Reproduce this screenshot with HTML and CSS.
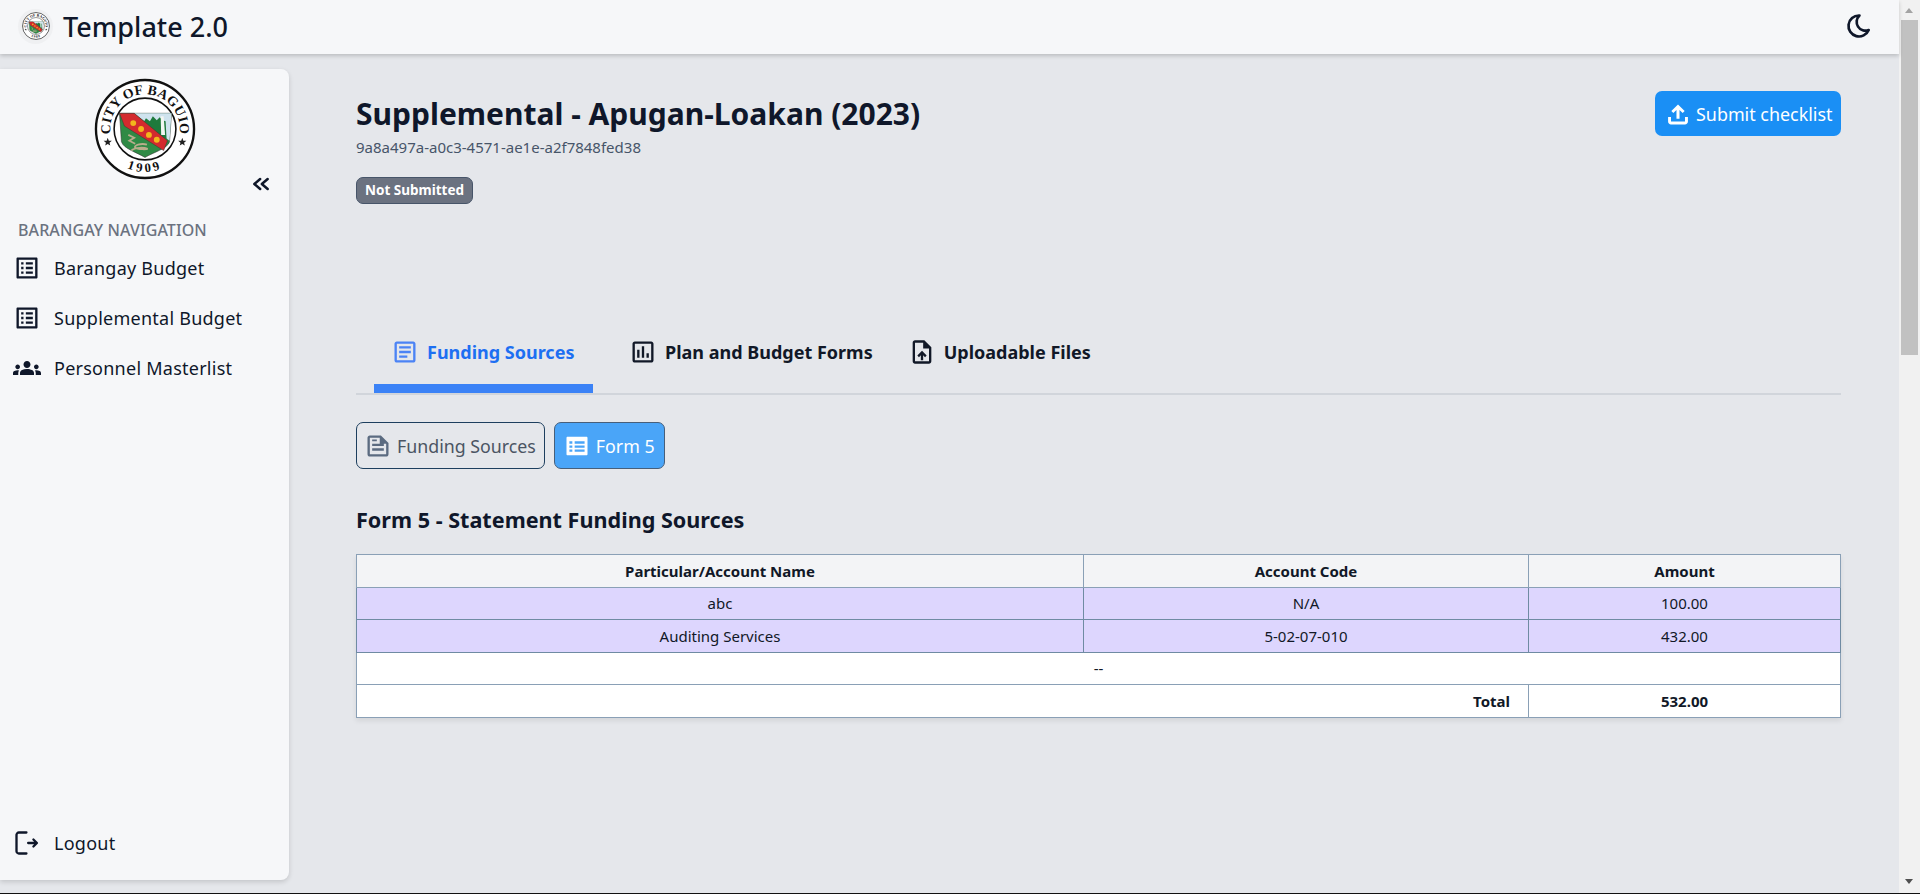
FILE: index.html
```html
<!DOCTYPE html>
<html lang="en">
<head>
<meta charset="utf-8">
<title>Template 2.0</title>
<link rel="stylesheet" href="styles.css">
</head>
<body>
<svg class="defs" width="0" height="0" aria-hidden="true">
  <defs>
    <symbol id="seal" viewBox="0 0 104 104">
      <circle cx="52" cy="52" r="50" fill="#fff" stroke="#111" stroke-width="2.4"/>
      <circle cx="52" cy="52" r="31.5" fill="#fff" stroke="#111" stroke-width="1.6"/>
      <path id="arcTop" d="M18.600 64.100 A35.500 35.500 0 1 1 85.400 64.100" fill="none"/>
      <path id="arcBot" d="M22 84 A44 44 0 0 0 82 84" fill="none"/>
      <text class="seal-text"><textPath href="#arcTop" startOffset="50%" text-anchor="middle">CITY OF BAGUIO</textPath></text>
      <text class="seal-year"><textPath href="#arcBot" startOffset="50%" text-anchor="middle">1909</textPath></text>
      <path d="M14 61l1.100 2.900 3.100.1-2.400 1.900.8 3-2.600-1.700-2.600 1.700.8-3-2.400-1.900 3.100-.1zM90 61l1.100 2.900 3.100.1-2.400 1.900.8 3-2.600-1.700-2.600 1.700.8-3-2.400-1.900 3.100-.1z" fill="#222"/>
      <path d="M26 36H79L77 65C75 72 60 76 52 81C44 76 30 72 28 65Z" fill="#2f8a45" stroke="#333" stroke-width=".6"/>
      <path d="M41 36H79L77 64Z" fill="#cfe3ee"/>
      <path d="M50 46l3-5 4 3 3-5 4 4 3-3 3 3 3 1 1 18-6-1-12-9z" fill="#1f7a3c"/>
      <path d="M68 39h3l1.500 19h-4z" fill="#f2f6f2"/>
      <path d="M26 36H41L75 64 71 74 31 49Z" fill="#d32a2e" stroke="#333" stroke-width=".5"/>
      <circle cx="40" cy="46" r="3" fill="#f2b61c"/><circle cx="48" cy="52" r="3" fill="#f2b61c"/><circle cx="56" cy="58" r="3" fill="#f2b61c"/><circle cx="64" cy="63" r="3" fill="#f2b61c"/>
      <path d="M35 58l6 3-5 3 6 3M38 74c4-4 14-3 16-2s-10 1-12-1 6-5 12-3" fill="none" stroke="#b9ad8c" stroke-width="1.8"/>
    </symbol>
    <symbol id="listbox" viewBox="0 0 24 24">
      <path fill="currentColor" d="M19 5v14H5V5h14m1.100-2H3.900c-.5 0-.9.400-.9.900v16.200c0 .4.400.9.900.9h16.200c.4 0 .9-.5.900-.9V3.900c0-.5-.5-.9-.9-.9zM11 7h6v2h-6V7zm0 4h6v2h-6v-2zm0 4h6v2h-6v-2zM7 7h2v2H7V7zm0 4h2v2H7v-2zm0 4h2v2H7v-2z"/>
    </symbol>
  </defs>
</svg>
<div class="window">
  <div class="page">
    <header class="topbar">
      <div class="brand">
        <span class="brand-logo"><svg class="brand-seal"><use href="#seal"/></svg></span>
        <span class="brand-name">Template 2.0</span>
      </div>
      <svg class="moon" viewBox="0 0 24 24"><path fill="none" stroke="currentColor" stroke-width="2.300" stroke-linecap="round" stroke-linejoin="round" d="M12 3c.132 0 .263 0 .393 0a7.500 7.500 0 0 0 7.920 12.446a9 9 0 1 1-8.313-12.454z"/></svg>
    </header>
    <div class="body">
      <aside class="sidebar">
        <div class="side-top">
          <svg class="side-seal"><use href="#seal"/></svg>
          <div class="collapse-row">
            <svg class="collapse" viewBox="0 0 24 24"><path fill="none" stroke="currentColor" stroke-width="3" stroke-linecap="round" stroke-linejoin="round" d="M11 6l-7 6 7 6M20 6l-7 6 7 6"/></svg>
          </div>
          <div class="side-heading">BARANGAY NAVIGATION</div>
          <nav class="side-nav">
            <a class="side-link"><svg class="side-icon"><use href="#listbox"/></svg>Barangay Budget</a>
            <a class="side-link"><svg class="side-icon"><use href="#listbox"/></svg>Supplemental Budget</a>
            <a class="side-link"><svg class="side-icon" viewBox="0 0 24 24"><path fill="currentColor" d="M12 12.750c1.630 0 3.070.390 4.240.900 1.080.480 1.760 1.560 1.760 2.730V18H6v-1.610c0-1.180.680-2.260 1.760-2.730 1.170-.520 2.610-.910 4.240-.910zM4 13c1.100 0 2-.900 2-2s-.900-2-2-2-2 .900-2 2 .900 2 2 2zm1.130 1.100C4.760 14.040 4.390 14 4 14c-.990 0-1.930.210-2.780.580C.480 14.900 0 15.620 0 16.430V18h4.500v-1.610c0-.830.230-1.610.630-2.290zM20 13c1.100 0 2-.900 2-2s-.900-2-2-2-2 .900-2 2 .900 2 2 2zm4 3.430c0-.810-.480-1.530-1.220-1.850-.850-.370-1.790-.580-2.780-.580-.390 0-.760.040-1.130.100.400.680.630 1.460.630 2.290V18H24v-1.570zM12 6c1.660 0 3 1.340 3 3s-1.340 3-3 3-3-1.340-3-3 1.340-3 3-3z"/></svg>Personnel Masterlist</a>
          </nav>
        </div>
        <a class="side-link"><svg class="side-icon" viewBox="0 0 24 24"><path fill="none" stroke="currentColor" stroke-width="2" stroke-linecap="round" stroke-linejoin="round" d="M11.500 3H5C4 3 3 4 3 5v14c0 1 1 2 2 2h6.500M13 12h7M17.500 9l3 3-3 3"/></svg>Logout</a>
      </aside>
      <main class="content">
        <section class="head">
          <div class="head-row">
            <div>
              <h1 class="title">Supplemental - Apugan-Loakan (2023)</h1>
              <p class="uuid">9a8a497a-a0c3-4571-ae1e-a2f7848fed38</p>
            </div>
            <button class="submit"><svg class="submit-icon" viewBox="0 0 24 24"><path fill="currentColor" d="M10.700 16V8.500L8 11.200 6.300 9.500 12 3.800l5.700 5.700-1.700 1.700-2.700-2.700V16zM3.500 14.500H6v4h12v-4h2.500v4c0 1.400-1.100 2.500-2.500 2.500H6c-1.400 0-2.500-1.100-2.500-2.500z"/></svg>Submit checklist</button>
          </div>
          <span class="badge">Not Submitted</span>
        </section>
        <nav class="tabs">
          <a class="tab tab-active"><svg class="tab-icon" viewBox="0 0 24 24"><path fill="currentColor" d="M19 5v14H5V5h14m0-2H5c-1.100 0-2 .9-2 2v14c0 1.100.9 2 2 2h14c1.100 0 2-.9 2-2V5c0-1.100-.9-2-2-2zM14 17H7v-2h7v2zm3-4H7v-2h10v2zm0-4H7V7h10v2z"/></svg>Funding Sources</a>
          <a class="tab"><svg class="tab-icon" viewBox="0 0 24 24"><path fill="currentColor" d="M9 17H7v-7h2v7zm4 0h-2V7h2v10zm4 0h-2v-4h2v4zm2 2H5V5h14v14zm0-16H5c-1.100 0-2 .9-2 2v14c0 1.100.9 2 2 2h14c1.100 0 2-.9 2-2V5c0-1.100-.9-2-2-2z"/></svg>Plan and Budget Forms</a>
          <a class="tab"><svg class="tab-icon" viewBox="0 0 24 24"><path fill="currentColor" d="M14 2H6c-1.100 0-2 .9-2 2v16c0 1.100.9 2 2 2h12c1.100 0 2-.9 2-2V8l-6-6zm4 18H6V4h7v5h5v11zM8 15.010l1.410 1.410L11 14.840V19h2v-4.160l1.590 1.590L16 15.010 12.010 11z"/></svg>Uploadable Files</a>
        </nav>
        <div class="subtabs">
          <button class="subtab subtab-outline"><svg class="subtab-icon" viewBox="0 0 24 24"><path fill="currentColor" d="M14.500 3H5c-1.100 0-2 .9-2 2v14c0 1.100.9 2 2 2h14c1.100 0 2-.9 2-2V9.500L14.500 3zM19 19H5V5h8.500v5H19v9zM7 16h10v-2H7v2zm0-4h10v-2H7v2zm0-4h4V6.500H7V8z"/></svg>Funding Sources</button>
          <button class="subtab subtab-solid"><svg class="subtab-icon" viewBox="0 0 24 24"><path fill="currentColor" d="M20 4H4c-.6 0-1 .4-1 1v14c0 .6.400 1 1 1h16c.6 0 1-.4 1-1V5c0-.6-.4-1-1-1zM5.500 8H8v2H5.500V8zm0 3.500H8v2H5.500v-2zm0 3.500H8v2H5.500v-2zM10 8h8.500v2H10V8zm0 3.500h8.500v2H10v-2zm0 3.500h8.500v2H10v-2z"/></svg>Form 5</button>
        </div>
        <h2 class="form-title">Form 5 - Statement Funding Sources</h2>
        <table class="sheet">
          <colgroup><col class="col-a"><col class="col-b"><col class="col-c"></colgroup>
          <thead>
            <tr><th>Particular/Account Name</th><th>Account Code</th><th>Amount</th></tr>
          </thead>
          <tbody>
            <tr class="row-hl"><td>abc</td><td>N/A</td><td>100.00</td></tr>
            <tr class="row-hl"><td>Auditing Services</td><td>5-02-07-010</td><td>432.00</td></tr>
            <tr><td colspan="3">--</td></tr>
            <tr class="row-total"><td colspan="2" class="total-label">Total</td><td>532.00</td></tr>
          </tbody>
        </table>
      </main>
    </div>
  </div>
  <div class="scrollbar">
    <span class="arrow arrow-up"></span>
    <span class="thumb"></span>
    <span class="track"></span>
    <span class="arrow arrow-down"></span>
  </div>
</div>
<div class="edge"></div>
</body>
</html>
```
FILE: styles.css
```css
* { box-sizing: border-box; }
html, body { margin: 0; height: 100%; overflow: hidden; }
body { font-family: "Noto Sans", "Open Sans", sans-serif; color: #0f172a; background: #e5e7eb; display: flex; flex-direction: column; }
.defs { position: absolute; }
.seal-text { font: bold 14px "Liberation Serif", serif; fill: #111; letter-spacing: .3px; }
.seal-year { font: bold 13px "Liberation Serif", serif; fill: #111; letter-spacing: 3px; }
.window { flex: 1; display: flex; min-height: 0; }
.page { flex: 1; min-width: 0; display: flex; flex-direction: column; }
.edge { height: 1px; flex: none; background: #111; }

.topbar { height: 54px; flex: none; background: #f6f7f9; display: flex; align-items: center; justify-content: space-between; padding: 0 26px 2px 18px; box-shadow: 0 2px 4px rgba(0,0,0,.18); position: relative; }
.brand { display: flex; align-items: center; gap: 10px; }
.brand-logo { width: 35px; height: 35px; border-radius: 50%; background: #eff0f2; display: flex; align-items: center; justify-content: center; }
.brand-seal { width: 28px; height: 28px; }
.brand-name { font-size: 27px; font-weight: 500; color: #0f172a; }
.moon { width: 28px; height: 28px; color: #0f172a; }

.body { flex: 1; display: flex; min-height: 0; padding-top: 15px; }
.sidebar { width: 289px; flex: none; height: 811px; background: #f6f7f9; border-radius: 0 8px 8px 0; box-shadow: 0 2px 5px rgba(0,0,0,.15); display: flex; flex-direction: column; justify-content: space-between; padding: 9px 0 17px; }
.side-top { display: flex; flex-direction: column; }
.side-seal { width: 102px; height: 102px; align-self: center; }
.collapse-row { display: flex; justify-content: flex-end; padding-right: 18px; margin-top: -6px; }
.collapse { width: 20px; height: 20px; color: #0f172a; }
.side-heading { margin: 26px 0 0 18px; font-size: 16px; font-weight: 500; color: #6b7280; line-height: 20px; letter-spacing: .1px; }
.side-nav { display: flex; flex-direction: column; gap: 10px; margin-top: 8px; }
.side-link { height: 40px; display: flex; align-items: center; padding-left: 13px; font-size: 18px; color: #0f172a; letter-spacing: .25px; }
.side-icon { width: 28px; height: 28px; margin-right: 13px; flex: none; color: #0f172a; }

.content { flex: 1; min-width: 0; padding: 0 58px 0 67px; }
.head { padding-top: 25px; height: 256px; }
.head-row { display: flex; justify-content: space-between; align-items: flex-start; }
.title { margin: 0; font-size: 30px; font-weight: 700; line-height: 40px; color: #0f172a; }
.uuid { margin: 3px 0 0; font-size: 15px; line-height: 20px; color: #475569; }
.submit { margin-top: -3px; height: 45px; width: 186px; border: 0; border-radius: 7px; background: #1a8ff5; color: #fff; font: 400 17.900px "Noto Sans", sans-serif; padding: 0 0 0 9px; display: flex; align-items: center; gap: 4px; }
.submit-icon { width: 28px; height: 28px; flex: none; }
.badge { display: block; width: fit-content; margin-top: 20px; height: 27px; line-height: 24px; padding: 0 8px; font-size: 13.500px; font-weight: 700; color: #fff; background: #6b7280; border: 1px solid #475569; border-radius: 7px; }

.tabs { display: flex; height: 70px; border-bottom: 2px solid #d1d5db; padding-left: 18px; }
.tab { display: flex; align-items: center; height: 68px; padding: 0 17px 15px 18px; font-size: 18px; font-weight: 700; color: #111827; white-space: nowrap; }
.tab-active { color: #1d6ff2; width: 219px; margin-right: 18px; padding-left: 17px; border-bottom: 9px solid #3b82f6; padding-bottom: 6px; }
.tab-icon { width: 28px; height: 28px; margin-right: 8px; flex: none; }
.tab-active .tab-icon { color: #4b83f5; }

.subtabs { display: flex; gap: 9px; margin-top: 27px; }
.subtab { height: 47px; border-radius: 7px; font: 400 17.800px "Noto Sans", sans-serif; display: flex; align-items: center; gap: 5px; white-space: nowrap; }
.subtab-outline { padding: 0 8px 0 7px; background: transparent; border: 1.500px solid #1d3f5e; color: #4b5563; }
.subtab-solid { padding: 0 9px 0 8px; background: #4aa5f8; border: 1px solid #475f7a; color: #fff; }
.subtab-icon { width: 28px; height: 28px; flex: none; }
.subtab-outline .subtab-icon { color: #5b6b80; }

.form-title { margin: 36px 0 0; font-size: 21.600px; font-weight: 700; line-height: 30px; color: #0f172a; }
.sheet { margin-top: 19px; width: 100%; border-collapse: collapse; table-layout: fixed; font-size: 15px; box-shadow: 0 3px 5px rgba(0,0,0,.08); }
.col-a { width: 727px; }
.col-b { width: 445px; }
.sheet th, .sheet td { border: 1px solid #8aa0b6; height: 32.500px; padding: 0 18px; text-align: center; font-weight: 400; color: #111827; }
.sheet th { background: #f3f4f6; font-weight: 700; }
.sheet td { background: #fff; }
.row-hl td { background: #ddd6fe; border-color: #6f8ba3; }
.row-total td { font-weight: 700; }
.sheet .total-label { text-align: right; }

.scrollbar { width: 21px; flex: none; background: #f1f1f1; display: flex; flex-direction: column; padding: 0 2px; }
.arrow { flex: none; width: 17px; height: 20px; position: relative; }
.arrow::after { content: ""; position: absolute; left: 4px; width: 0; height: 0; border-left: 4.500px solid transparent; border-right: 4.500px solid transparent; }
.arrow-up::after { top: 8px; border-bottom: 5px solid #a3a3a3; }
.arrow-down::after { top: 6px; border-top: 5px solid #505050; }
.thumb { flex: none; width: 17px; height: 335px; background: #c1c1c1; }
.track { flex: 1; }
```
